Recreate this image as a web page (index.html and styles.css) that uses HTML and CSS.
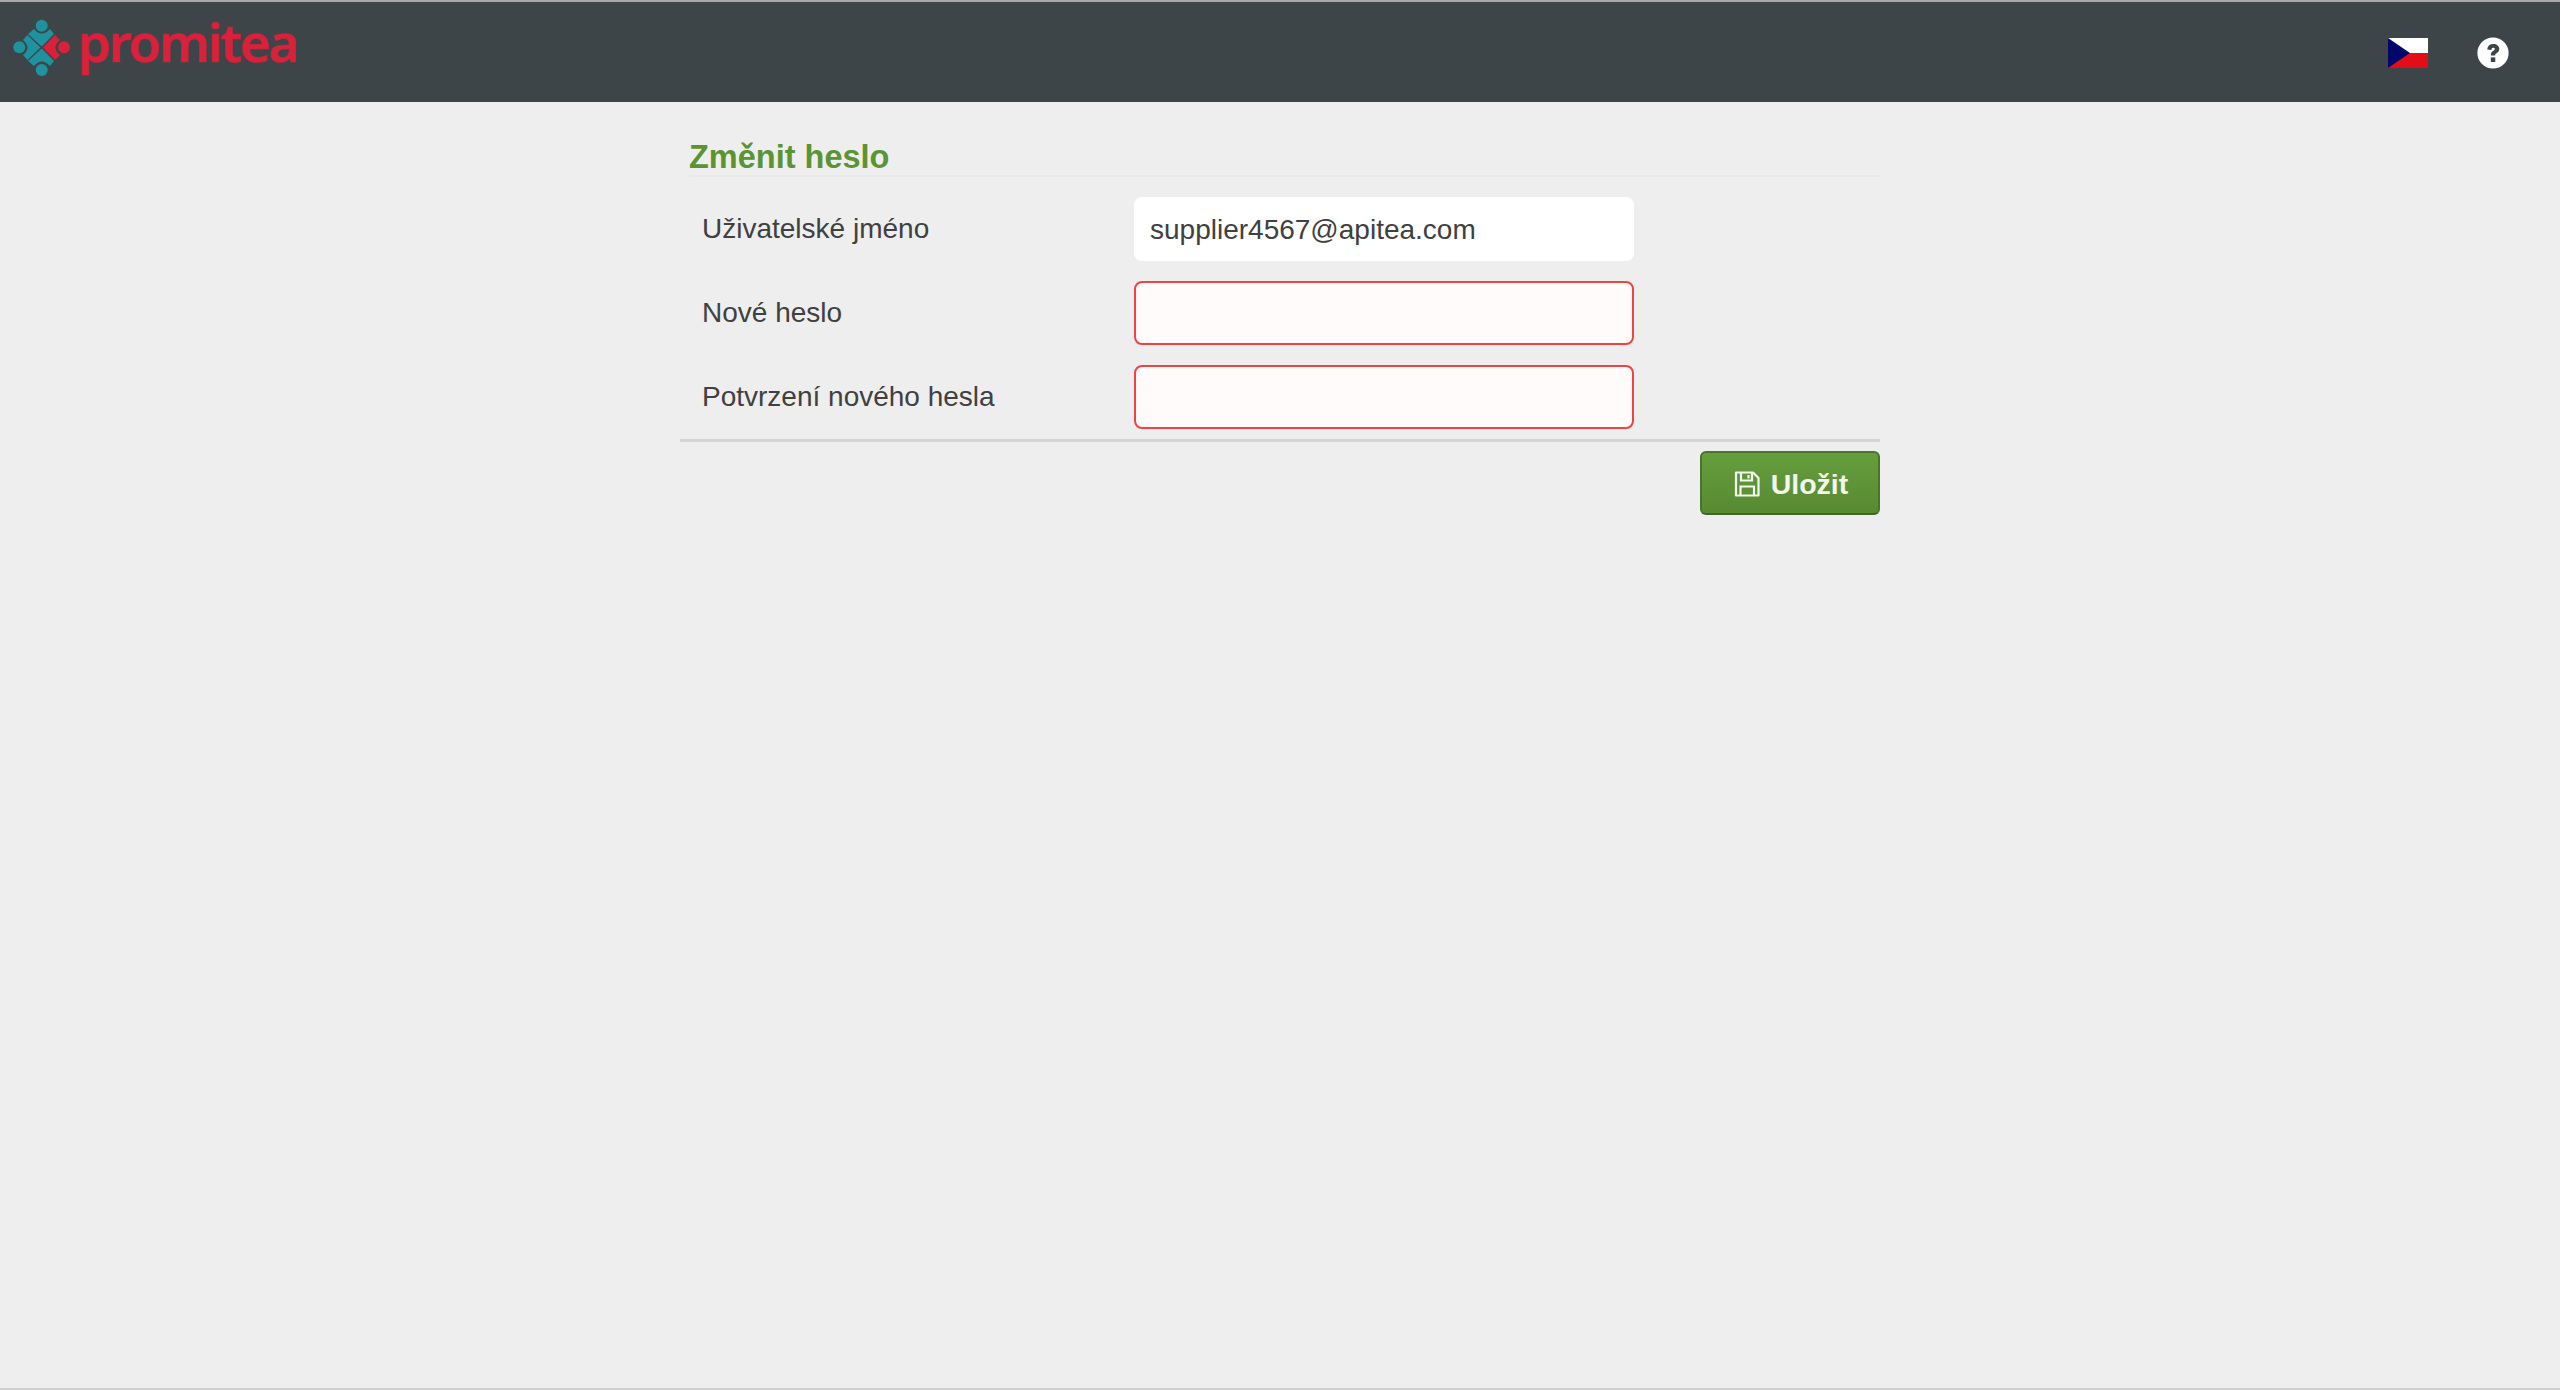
FILE: index.html
```html
<!DOCTYPE html>
<html lang="cs">
<head>
<meta charset="utf-8">
<title>Změnit heslo</title>
<link rel="stylesheet" href="styles.css">
</head>
<body>
<header class="topbar">
  <a class="brand">
    <svg class="brand-mark" viewBox="0 0 70 66" width="70" height="66">
      <circle cx="33.7" cy="11.7" r="6" fill="#1f919f"/>
      <circle cx="33.7" cy="56" r="6" fill="#1f919f"/>
      <circle cx="11.3" cy="33.3" r="6" fill="#1f919f"/>
      <circle cx="56" cy="33.3" r="6" fill="#d8213a"/>
      <path d="M20 20 L26 15 Q33.7 24 42 15 L46 20 L33.7 32.5 Z" fill="#1f919f"/>
      <path d="M20 47 L26 52 Q33.7 43 42 52 L46 47 L33.7 34.5 Z" fill="#1f919f"/>
      <path d="M32.5 33.5 L19.5 21 L15 26 Q24 33.5 15 41 L19.5 46 Z" fill="#1f919f"/>
      <path d="M35 33.5 L47 21 L52 26 Q43 33.5 52 41 L47 46 Z" fill="#d8213a"/>
    </svg>
    <span class="brand-name">promitea</span>
  </a>
  <div class="topbar-tools">
    <svg class="flag" viewBox="0 0 40 30" width="40" height="30">
      <rect width="40" height="15" fill="#ffffff"/>
      <rect y="15" width="40" height="15" fill="#e30d17"/>
      <path d="M0 0 L22 15 L0 30 Z" fill="#00076b"/>
    </svg>
    <svg class="help" viewBox="0 0 32 32" width="32" height="32">
      <circle cx="16" cy="16" r="15.6" fill="#ffffff"/>
      <path d="M10.2 12.4 C10.6 8.8 13 7 16.3 7 C19.8 7 22.3 9.1 22.3 12 C22.3 14.2 21.1 15.2 19.5 16.2 C18.4 16.9 18.2 17.4 18.2 18.4 L13.8 18.4 C13.8 16.2 14.5 15.1 16 14.1 C17.2 13.3 17.8 12.9 17.8 12.1 C17.8 11.3 17.1 10.8 16.2 10.8 C15.2 10.8 14.5 11.5 14.3 13 Z" fill="#3d4549"/>
      <rect x="13.8" y="20.4" width="4.5" height="4.6" fill="#3d4549"/>
    </svg>
  </div>
</header>
<main class="page">
  <h1 class="title">Změnit heslo</h1>
  <form class="form">
    <div class="row">
      <label class="label" for="u">Uživatelské jméno</label>
      <input class="field" id="u" type="text" value="supplier4567@apitea.com">
    </div>
    <div class="row">
      <label class="label" for="n">Nové heslo</label>
      <input class="field invalid" id="n" type="password">
    </div>
    <div class="row">
      <label class="label" for="c">Potvrzení nového hesla</label>
      <input class="field invalid" id="c" type="password">
    </div>
    <div class="actions">
      <button class="save" type="button">
        <svg class="save-icon" viewBox="0 0 26 26" width="26" height="26">
          <path d="M2 1.5 H19 L24.5 7 V24.5 H2 Z" fill="none" stroke="currentColor" stroke-width="2.2" stroke-linejoin="round"/>
          <path d="M7 2 V9.5 H18 V2 M14.5 4 V7.5" fill="none" stroke="currentColor" stroke-width="2.2"/>
          <path d="M6.5 24 V15.5 H20 V24" fill="none" stroke="currentColor" stroke-width="2.2"/>
        </svg>
        <span>Uložit</span>
      </button>
    </div>
  </form>
</main>
</body>
</html>
```
FILE: styles.css
```css
* { box-sizing: border-box; }
html, body { height: 100%; }
body {
  margin: 0;
  min-height: 1390px;
  background: #eeeeee;
  border-bottom: 2px solid #cfcfcf;
  font-family: "Liberation Sans", Arial, sans-serif;
  color: #404040;
}
.topbar {
  height: 102px;
  background: #3d4549;
  border-top: 2px solid #a9a9a9;
  display: flex;
  justify-content: space-between;
  align-items: flex-start;
}
.brand { display: flex; align-items: flex-start; padding: 12px 0 0 8px; }
.brand-mark { display: block; }
.brand-name {
  margin-left: 0;
  font-family: "Noto Sans", sans-serif;
  font-weight: 600;
  font-size: 53px;
  line-height: 52px;
  color: #d8213a;
  letter-spacing: -2.2px;
  -webkit-text-stroke: 0.6px #d8213a;
  padding-top: 2px;
}
.topbar-tools { display: flex; align-items: center; gap: 49px; padding: 35px 51px 0 0; }
.flag, .help { display: block; }
.page { width: 1200px; margin: 0 auto; }
.title {
  margin: 0 0 0 9px;
  height: 75px;
  padding-top: 36px;
  font-size: 32.5px;
  line-height: 38px;
  font-weight: 700;
  color: #5b9433;
  border-bottom: 2px solid #e8e8e8;
}
.form { padding-top: 20px; }
.row { display: flex; align-items: center; height: 64px; margin-bottom: 20px; padding-left: 22px; }
.row:nth-child(3) { margin-bottom: 10px; }
.label { width: 432px; font-size: 28px; line-height: 40px; }
.field {
  width: 500px;
  height: 64px;
  padding: 2px 14px 0;
  border: 2px solid #ffffff;
  border-radius: 8px;
  background: #ffffff;
  font: 28px "Liberation Sans", Arial, sans-serif;
  color: #404040;
  outline: none;
}
.field.invalid { background: #fffbfa; border-color: #ee4444; }
.actions { display: flex; justify-content: flex-end; border-top: 3px solid #d4d4d4; padding-top: 9px; }
.save {
  width: 180px;
  height: 64px;
  display: flex;
  align-items: center;
  justify-content: center;
  gap: 11px;
  padding: 2px 0 0 2px;
  background: linear-gradient(#669e3d, #578a33);
  border: 2px solid #4a742c;
  border-bottom-color: #41672a;
  border-radius: 6px;
  color: #f2f6ee;
  font: 700 28.5px "Liberation Sans", Arial, sans-serif;
}
.save-icon { display: block; }
```
